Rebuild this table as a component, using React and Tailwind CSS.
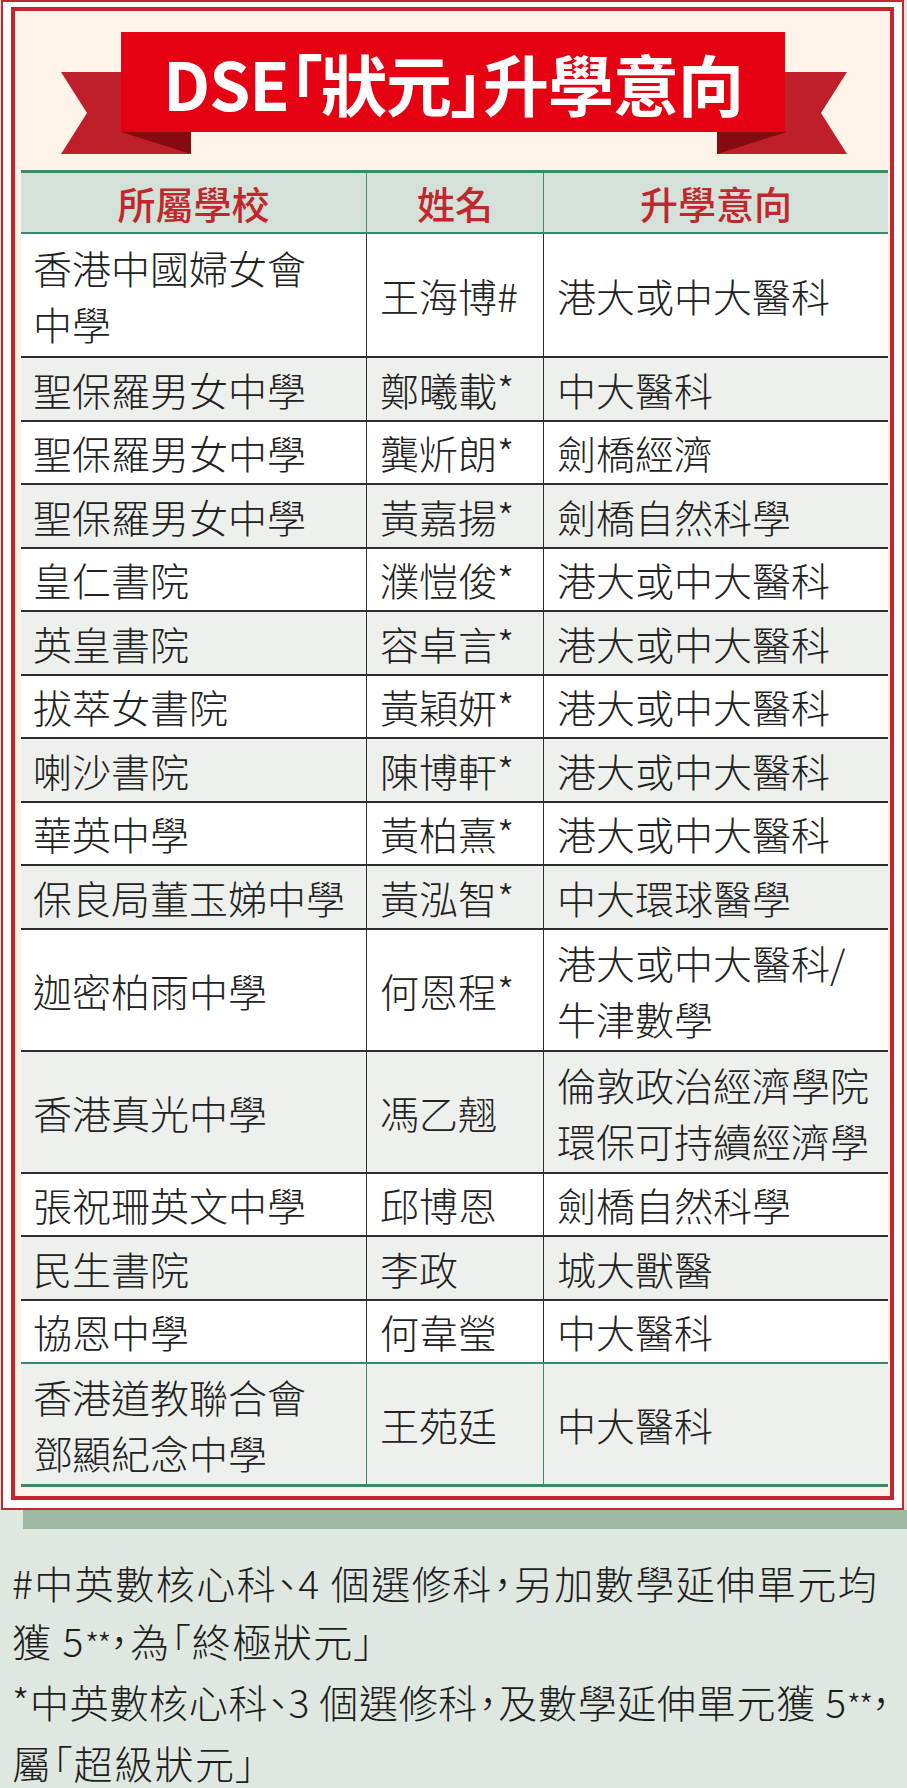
import React from "react";

const rows = [
  { s: ["香港中國婦女會", "中學"], n: "王海博#", d: ["港大或中大醫科"], tall: true },
  { s: ["聖保羅男女中學"], n: "鄭曦載*", d: ["中大醫科"] },
  { s: ["聖保羅男女中學"], n: "龔炘朗*", d: ["劍橋經濟"] },
  { s: ["聖保羅男女中學"], n: "黃嘉揚*", d: ["劍橋自然科學"] },
  { s: ["皇仁書院"], n: "濮愷俊*", d: ["港大或中大醫科"] },
  { s: ["英皇書院"], n: "容卓言*", d: ["港大或中大醫科"] },
  { s: ["拔萃女書院"], n: "黃穎妍*", d: ["港大或中大醫科"] },
  { s: ["喇沙書院"], n: "陳博軒*", d: ["港大或中大醫科"] },
  { s: ["華英中學"], n: "黃柏熹*", d: ["港大或中大醫科"] },
  { s: ["保良局董玉娣中學"], n: "黃泓智*", d: ["中大環球醫學"] },
  { s: ["迦密柏雨中學"], n: "何恩程*", d: ["港大或中大醫科/", "牛津數學"], tall: true },
  { s: ["香港真光中學"], n: "馮乙翹", d: ["倫敦政治經濟學院", "環保可持續經濟學"], tall: true },
  { s: ["張祝珊英文中學"], n: "邱博恩", d: ["劍橋自然科學"] },
  { s: ["民生書院"], n: "李政", d: ["城大獸醫"] },
  { s: ["協恩中學"], n: "何韋瑩", d: ["中大醫科"] },
  { s: ["香港道教聯合會", "鄧顯紀念中學"], n: "王苑廷", d: ["中大醫科"], tall: true },
];

function Lines({ items }) {
  return (
    <div className="flex flex-col">
      {items.map((t, k) => (
        <span key={k} className="whitespace-nowrap">{t}</span>
      ))}
    </div>
  );
}

function Stars() {
  return <span className="text-[32px] tracking-[-2px]">**</span>;
}

export default function App() {
  return (
    <div className="w-[907px] min-h-[1788px] bg-[#dfe7e1] font-['Noto_Sans_CJK_TC','Noto_Sans_CJK_SC',sans-serif]">
      {/* Frame */}
      <div className="ml-[1px] w-[903px] border-2 border-[#c5262e] bg-white px-[8px] pt-[5px] pb-[8px]">
        <div className="border-4 border-[#c5262e] bg-[#fdf3e8] pt-[21px] pb-[9px]">
          {/* Ribbon title */}
          <div className="relative ml-[46px] h-[122px] w-[786px]">
            <svg className="absolute inset-0" width="786" height="122" viewBox="0 0 786 122">
              <polygon points="0,40 130,40 130,122 0,122 26,81" fill="#bf1f2b" />
              <polygon points="60,100 130,100 130,122" fill="#860b10" />
              <polygon points="786,40 656,40 656,122 786,122 760,81" fill="#bf1f2b" />
              <polygon points="726,100 656,100 656,122" fill="#860b10" />
            </svg>
            <div className="relative ml-[60px] flex h-[100px] w-[664px] items-center justify-center bg-[#e50012]">
              <span className="text-[66px] font-bold leading-none tracking-[-1px] text-white [font-feature-settings:'palt']">DSE「狀元」升學意向</span>
            </div>
          </div>

          {/* Table */}
          <div className="ml-[6px] mt-[16px] w-[867px] border-b-[3px] border-[#3a8a6a]">
            <div className="grid h-[64px] grid-cols-[345px_177px_345px] border-t-[3px] border-b-2 border-[#3a8a6a] bg-[#d3e1d8] text-[38px] font-medium text-[#c1272d]">
              <div className="flex items-center justify-center">所屬學校</div>
              <div className="flex items-center justify-center border-l-[1.5px] border-[#4b8a70]">姓名</div>
              <div className="flex items-center justify-center border-l-[1.5px] border-[#4b8a70]">升學意向</div>
            </div>
            {rows.map((r, i) => {
              const last = i === rows.length - 1;
              const bg = i % 2 ? "bg-[#eef0ed]" : "bg-white";
              const h = r.tall ? "h-[122px]" : "h-[63.5px]";
              const top = i === 0 ? "" : last ? "border-t-2 border-[#3a8a6a]" : "border-t-2 border-[#2e2e2e]";
              const vline = last ? "border-l-[1.5px] border-[#3a8a6a]" : "border-l-[1.5px] border-[#2e2e2e]";
              return (
                <div
                  key={i}
                  className={`grid grid-cols-[345px_177px_345px] ${h} ${bg} ${top} text-[39px] font-light leading-[56px] text-[#222]`}
                >
                  <div className="flex items-center pl-[12px]">
                    <Lines items={r.s} />
                  </div>
                  <div className={`flex items-center pl-[13px] ${vline}`}>
                    <span className="whitespace-nowrap">{r.n}</span>
                  </div>
                  <div className={`flex items-center pl-[13px] ${vline}`}>
                    <Lines items={r.d} />
                  </div>
                </div>
              );
            })}
          </div>
        </div>
      </div>

      {/* Shadow band */}
      <div className="ml-[23px] h-[19px] bg-[#9dbaa5]" />

      {/* Footnotes */}
      <div className="px-[12px] pt-[24px] text-[39px] font-light leading-[58px] text-[#1e1e1e] [font-feature-settings:'palt'] tracking-[1.5px]">
        <p className="whitespace-nowrap">#中英數核心科、4 個選修科，另加數學延伸單元均</p>
        <p className="whitespace-nowrap">獲 5<Stars />，為「終極狀元」</p>
        <p className="whitespace-nowrap tracking-[0.7px]">*中英數核心科、3 個選修科，及數學延伸單元獲 5<Stars />，</p>
        <p className="whitespace-nowrap">屬「超級狀元」</p>
      </div>
    </div>
  );
}
